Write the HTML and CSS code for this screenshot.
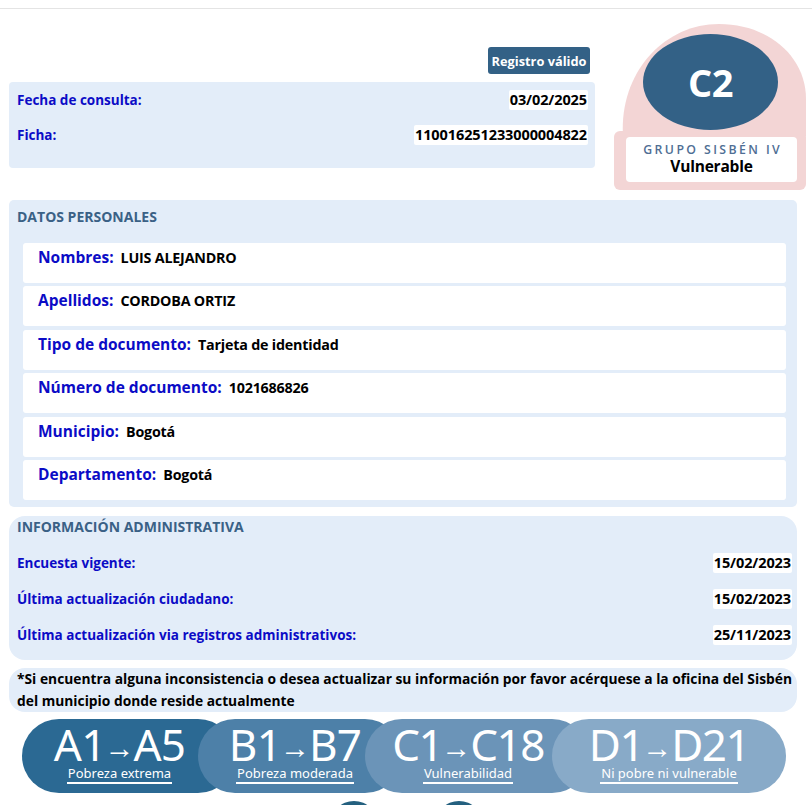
FILE: index.html
```html
<!DOCTYPE html>
<html lang="es">
<head>
<meta charset="utf-8">
<title>Consulta Sisbén</title>
<link rel="stylesheet" href="styles.css">
</head>
<body>
<div class="topbar"></div>
<main class="page">
  <section class="top">
    <div class="top-left">
      <div class="status-row"><span class="status">Registro válido</span></div>
      <div class="info">
        <div class="info-row"><span class="lbl">Fecha de consulta:</span><span class="val">03/02/2025</span></div>
        <div class="info-row"><span class="lbl">Ficha:</span><span class="val">110016251233000004822</span></div>
      </div>
    </div>
    <div class="badge">
      <svg class="badge-bg" width="193" height="166" viewBox="0 0 193 166">
        <path d="M10 112 C6 50 50 0 106 0 C155 0 193 32 193 75 L193 112 Z" fill="#f3d5d5"/>
        <rect x="1" y="107" width="192" height="59" rx="6" fill="#f3d5d5"/>
        <ellipse cx="97.5" cy="58" rx="67.5" ry="48" fill="#336186"/>
      </svg>
      <div class="badge-code">C2</div>
      <div class="badge-box">
        <div class="badge-group">GRUPO SISBÉN IV</div>
        <div class="badge-name">Vulnerable</div>
      </div>
    </div>
  </section>

  <section class="panel personal">
    <h2 class="panel-title">DATOS PERSONALES</h2>
    <div class="rows">
      <div class="prow"><span class="plbl">Nombres:</span><span class="pval">LUIS ALEJANDRO</span></div>
      <div class="prow"><span class="plbl">Apellidos:</span><span class="pval">CORDOBA ORTIZ</span></div>
      <div class="prow"><span class="plbl">Tipo de documento:</span><span class="pval">Tarjeta de identidad</span></div>
      <div class="prow"><span class="plbl">Número de documento:</span><span class="pval">1021686826</span></div>
      <div class="prow"><span class="plbl">Municipio:</span><span class="pval">Bogotá</span></div>
      <div class="prow"><span class="plbl">Departamento:</span><span class="pval">Bogotá</span></div>
    </div>
  </section>

  <section class="panel admin">
    <h2 class="panel-title">INFORMACIÓN ADMINISTRATIVA</h2>
    <div class="arows">
      <div class="info-row"><span class="lbl">Encuesta vigente:</span><span class="val">15/02/2023</span></div>
      <div class="info-row"><span class="lbl">Última actualización ciudadano:</span><span class="val">15/02/2023</span></div>
      <div class="info-row"><span class="lbl">Última actualización via registros administrativos:</span><span class="val">25/11/2023</span></div>
    </div>
  </section>

  <section class="panel note">
    <p>*Si encuentra alguna inconsistencia o desea actualizar su información por favor acérquese a la oficina del Sisbén<br>del municipio donde reside actualmente</p>
  </section>

  <section class="scale">
    <div class="seg seg-a"><span class="range">A1<span class="arr">→</span>A5</span><span class="cap">Pobreza extrema</span></div>
    <div class="seg seg-b"><span class="range">B1<span class="arr">→</span>B7</span><span class="cap">Pobreza moderada</span></div>
    <div class="seg seg-c"><span class="range">C1<span class="arr">→</span>C18</span><span class="cap">Vulnerabilidad</span></div>
    <div class="seg seg-d"><span class="range">D1<span class="arr">→</span>D21</span><span class="cap">Ni pobre ni vulnerable</span></div>
  </section>

  <div class="dots"><span class="dot"></span><span class="dot"></span></div>
</main>
</body>
</html>
```

FILE: styles.css
```css
* { box-sizing: border-box; }

html, body {
  margin: 0;
  padding: 0;
  background: #ffffff;
  overflow: hidden;
}

body {
  font-family: "Open Sans", "Noto Sans", "DejaVu Sans", sans-serif;
  color: #000;
  width: 812px;
  height: 805px;
}

.topbar {
  height: 9px;
  border-bottom: 1px solid #e4e4e4;
}

.page {
  padding-top: 15px;
  height: 796px;
  overflow: hidden;
}

/* ---------- top ---------- */
.top {
  display: flex;
  padding-left: 9px;
  height: 166px;
}

.top-left {
  width: 586px;
  padding-top: 23px;
}

.status-row {
  display: flex;
  justify-content: flex-end;
  padding-right: 5px;
}

.status {
  display: inline-flex;
  align-items: center;
  justify-content: center;
  width: 102px;
  height: 27px;
  background: #336186;
  color: #fff;
  font-weight: 700;
  font-size: 12.8px;
  border-radius: 3px;
}

.info {
  margin-top: 8px;
  height: 86px;
  background: #e3edf9;
  border-radius: 4px;
  padding: 8px 7px 0 8px;
  display: flex;
  flex-direction: column;
  gap: 15px;
}

.info-row {
  display: flex;
  justify-content: space-between;
  align-items: center;
  height: 20px;
}

.lbl {
  color: #0b0bc6;
  font-weight: 700;
  font-size: 13.5px;
}

.val {
  background: #fff;
  font-weight: 700;
  font-size: 14.5px;
  line-height: 20px;
  padding: 0 1px;
  border-radius: 2px;
  letter-spacing: -0.1px;
}

/* ---------- badge ---------- */
.badge {
  position: relative;
  width: 193px;
  height: 166px;
  margin-left: 18px;
  padding-top: 10px;
}

.badge-bg {
  position: absolute;
  left: 0;
  top: 0;
}

.badge-code {
  position: relative;
  width: 135px;
  height: 96px;
  margin-left: 30px;
  display: flex;
  align-items: center;
  justify-content: center;
  color: #fff;
  font-weight: 700;
  font-size: 38px;
  letter-spacing: -0.5px;
}

.badge-box {
  position: relative;
  margin: 7px 0 0 13px;
  width: 171px;
  height: 45px;
  background: #fff;
  border-radius: 4px;
  display: flex;
  flex-direction: column;
  align-items: center;
  padding-top: 5px;
}

.badge-group {
  font-size: 12.3px;
  font-weight: 600;
  color: #4f6e94;
  letter-spacing: 2.4px;
  line-height: 15px;
  margin-right: -2.4px;
}

.badge-name {
  font-size: 15.5px;
  font-weight: 700;
  line-height: 18px;
  letter-spacing: -0.2px;
}

/* ---------- panels ---------- */
.panel {
  margin: 0 15px 0 9px;
  background: #e3edf9;
}

.panel-title {
  margin: 0;
  font-size: 14px;
  line-height: 18px;
  font-weight: 700;
  color: #3a6186;
}

.personal {
  margin-top: 10px;
  border-radius: 5px;
  padding: 8px 11px 7px 14px;
}

.personal .panel-title {
  margin-left: -6px;
}

.rows {
  margin-top: 17px;
  display: flex;
  flex-direction: column;
  gap: 3.4px;
}

.prow {
  height: 40px;
  background: #fff;
  border-radius: 3px;
  padding: 4px 15px 0 15px;
  display: flex;
  align-items: baseline;
  gap: 7px;
}

.plbl {
  color: #0b0bc6;
  font-weight: 700;
  font-size: 15.5px;
  line-height: 20px;
}

.pval {
  font-weight: 700;
  font-size: 14.3px;
  line-height: 20px;
  letter-spacing: -0.2px;
}

.admin {
  margin-top: 9px;
  border-radius: 16px;
  padding: 2px 5px 15px 8px;
}

.arows {
  margin-top: 17px;
  display: flex;
  flex-direction: column;
  gap: 16px;
}

.note {
  margin-top: 8px;
  border-radius: 16px;
  height: 44px;
  padding: 0 8px;
}

.note p {
  margin: 0;
  font-size: 13.8px;
  font-weight: 700;
  line-height: 22px;
  white-space: nowrap;
}

/* ---------- scale ---------- */
.scale {
  display: flex;
  margin: 7px 0 0 22px;
  width: 764px;
  height: 74px;
}

.seg {
  height: 74px;
  border-radius: 37px;
  display: flex;
  flex-direction: column;
  align-items: center;
  color: #fff;
  padding-top: 3px;
  padding-right: 18px;
  font-family: "Noto Sans", "Open Sans", sans-serif;
}

.seg + .seg {
  margin-left: -37px;
}

.seg-a { width: 213px; background: #2b6993; }
.seg-b { width: 204px; background: #4d80a8; padding-right: 10px; }
.seg-c { width: 224px; background: #6b94b8; }
.seg-d { width: 234px; background: #88aac8; padding-right: 0; }

.range {
  display: block;
  font-size: 44px;
  line-height: 44px;
  height: 44px;
  font-weight: 400;
  letter-spacing: -0.8px;
  white-space: nowrap;
}

.seg-c .range,
.seg-d .range {
  letter-spacing: -1.5px;
}

.arr {
  font-size: 30px;
  letter-spacing: -2px;
  margin: 0 1px 0 -1px;
  position: relative;
  top: -3px;
}

.cap {
  display: block;
  font-size: 13px;
  line-height: 15px;
  border-bottom: 2px solid #fff;
  padding: 0 1px 1px;
}

.dots {
  display: flex;
  margin: 8px 0 0 330px;
  gap: 57px;
}

.dot {
  width: 48px;
  height: 48px;
  border-radius: 50%;
  background: #24607f;
}
```
